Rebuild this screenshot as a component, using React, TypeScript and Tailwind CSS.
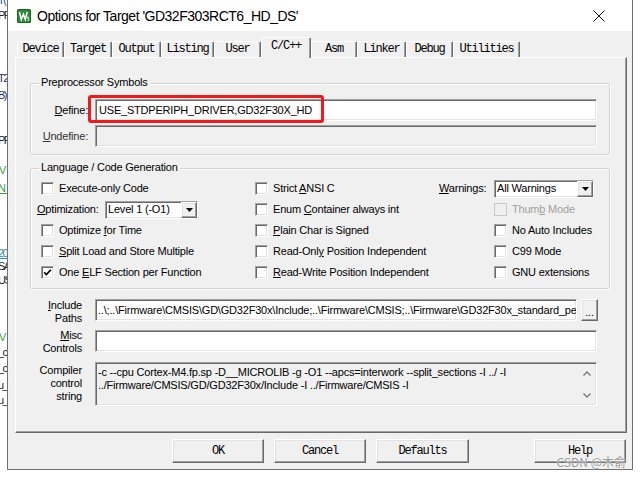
import React from "react";

const sans = "font-['Liberation_Sans',Arial,sans-serif]";
const mono = "font-['Liberation_Mono','Courier_New',monospace]";

// classic win32 3d edges
const sunken =
  "border border-t-[#a0a0a0] border-l-[#a0a0a0] border-b-white border-r-white shadow-[inset_1px_1px_0_#696969,inset_-1px_-1px_0_#e3e3e3]";
const raised =
  "border border-t-white border-l-white border-b-[#696969] border-r-[#696969] shadow-[inset_-1px_-1px_0_#a0a0a0,inset_1px_1px_0_#e3e3e3]";

function U({ children }: { children: React.ReactNode }) {
  return <span className="underline decoration-1 underline-offset-[1px]">{children}</span>;
}

function Check({ checked = false, disabled = false }: { checked?: boolean; disabled?: boolean }) {
  return (
    <span
      className={`w-[13px] h-[13px] shrink-0 flex items-center justify-center ${
        disabled ? "border border-[#c8c8c8] bg-[#f0f0f0]" : `${sunken} bg-white`
      }`}
    >
      {checked && (
        <svg width="9" height="9" viewBox="0 0 9 9">
          <path d="M1.2 4.2 L3.4 6.6 L7.8 1.8" stroke="#000" strokeWidth="1.7" fill="none" />
        </svg>
      )}
    </span>
  );
}

function CheckItem({
  children,
  checked,
  disabled,
  className = "",
}: {
  children: React.ReactNode;
  checked?: boolean;
  disabled?: boolean;
  className?: string;
}) {
  return (
    <div className={`flex items-center gap-[5px] whitespace-nowrap ${disabled ? "text-[#a0a0a0]" : ""} ${className}`}>
      <Check checked={checked} disabled={disabled} />
      <span>{children}</span>
    </div>
  );
}

function Select({ value, className }: { value: string; className: string }) {
  return (
    <div className={`${sunken} bg-white h-[18px] flex items-stretch ${className}`}>
      <span className="flex-1 pl-[2px] flex items-center whitespace-nowrap">{value}</span>
      <span className={`${raised} bg-[#f0f0f0] w-[16px] flex items-center justify-center`}>
        <svg width="7" height="4" viewBox="0 0 7 4">
          <path d="M0 0 H7 L3.5 4 Z" fill="#000" />
        </svg>
      </span>
    </div>
  );
}

function Group({ title, className, children }: { title: string; className: string; children: React.ReactNode }) {
  return (
    <div className={`relative w-[580px] border border-[#d3d3d3] rounded-[2px] shadow-[1px_1px_0_#fff,inset_1px_1px_0_#fff] ${className}`}>
      <span className="absolute left-[8px] top-[-8px] px-[2px] bg-[#f0f0f0] whitespace-nowrap">{title}</span>
      {children}
    </div>
  );
}

// bits of the editor window peeking out behind the dialog
function BackdropStrip() {
  return (
    <div className="w-[7px] h-full shrink-0 overflow-hidden flex flex-col text-[11px] leading-[13px] tracking-[-1.5px] whitespace-nowrap">
      <div className="-mt-[6px] -ml-[2px] text-[#1f4fa8]">T(</div>
      <div className="mt-[2px] -ml-[2px] text-[#222]">PP</div>
      <div className="mt-[50px] -ml-[2px] text-[#1c2a5c]">T2</div>
      <div className="mt-[4px] -ml-[2px] text-[#1c2a5c]">B)</div>
      <div className="mt-[32px] -ml-[2px] text-[#222]">PP</div>
      <div className="mt-[17px] -ml-[1px] text-[#3c9c3c]">V</div>
      <div className="mt-[5px] -ml-[2px] text-[#3c9c3c] underline">N_</div>
      <div className="mt-[52px] -ml-[2px] text-[#2f8ac0] underline">20</div>
      <div className="-ml-[2px] text-[#222]">SA</div>
      <div className="mt-[1px] -ml-[2px] text-[#222]">US</div>
      <div className="mt-[44px] -ml-[1px] text-[#3c9c3c]">V</div>
      <div className="mt-[2px] -ml-[2px] text-[#222]">_c</div>
      <div className="mt-[3px] -ml-[2px] text-[#222]">_c</div>
      <div className="mt-[4px] -ml-[2px] text-[#222]">u_</div>
      <div className="mt-[2px] -ml-[2px] text-[#222]">u_</div>
    </div>
  );
}

function TitleBar() {
  return (
    <div className="h-[31px] shrink-0 bg-white flex items-center pl-[9px] pr-[27px]">
      <svg width="14" height="14" viewBox="0 0 14 14">
        <rect x="0" y="0" width="14" height="14" rx="1.5" fill="#2f8a35" />
        <rect x="0.5" y="0.5" width="13" height="13" rx="1.5" fill="none" stroke="#1c6322" />
        <path d="M2.4 3 L4.3 10.5 L6.4 5.2 L8.3 10.5 L10.2 3" stroke="#fff" strokeWidth="1.5" fill="none" />
        <path d="M10.4 8 H12.2 M10.6 8 V9.6 H12 V11.4 H10.4" stroke="#dfeee0" strokeWidth="0.8" fill="none" />
      </svg>
      <span className="ml-[6px] text-[14px] leading-[16px] tracking-[-0.5px] text-black">
        Options for Target 'GD32F303RCT6_HD_DS'
      </span>
      <svg className="ml-auto" width="12" height="12" viewBox="0 0 12 12">
        <path d="M0.5 0.5 L11.5 11.5 M11.5 0.5 L0.5 11.5" stroke="#111" strokeWidth="1" />
      </svg>
    </div>
  );
}

const tabs = [
  { label: "Device", w: "w-[47px]" },
  { label: "Target", w: "w-[48px]" },
  { label: "Output", w: "w-[49px]" },
  { label: "Listing", w: "w-[53px]" },
  { label: "User", w: "w-[47px]" },
  { label: "C/C++", w: "w-[50px]", active: true },
  { label: "Asm", w: "w-[46px]" },
  { label: "Linker", w: "w-[49px]" },
  { label: "Debug", w: "w-[47px]" },
  { label: "Utilities", w: "w-[67px]" },
];

function Tabs() {
  return (
    <div className={`h-[20px] ml-[9px] flex items-end ${mono} text-[12px] leading-[13px] tracking-[-1.2px]`}>
      {tabs.map((t) =>
        t.active ? (
          <div
            key={t.label}
            className={`${t.w} h-[21px] -mb-px relative z-10 bg-[#f0f0f0] border-t border-l border-r border-t-white border-l-white border-r-[#696969] shadow-[inset_-1px_0_0_#a0a0a0] rounded-t-[2px] flex justify-center pt-[2px]`}
          >
            {t.label}
          </div>
        ) : (
          <div
            key={t.label}
            className={`${t.w} h-[16px] border-t border-l border-r border-t-white border-l-white border-r-[#696969] shadow-[inset_-1px_0_0_#a0a0a0] rounded-t-[2px] flex items-center justify-center`}
          >
            {t.label}
          </div>
        )
      )}
    </div>
  );
}

function Panel() {
  return (
    <div className="ml-[7px] w-[612px] h-[376px] border-t border-l border-t-white border-l-white border-r border-b border-r-[#696969] border-b-[#696969] shadow-[inset_-1px_-1px_0_#a0a0a0] pl-[14px] pt-[25px]">
      {/* Preprocessor symbols */}
      <Group title="Preprocessor Symbols" className="h-[72px] pt-[15px]">
        <div className="flex items-center">
          <span className="w-[57px] text-right">
            <U>D</U>efine:
          </span>
          <div className="relative ml-[7px]">
            <div className={`${sunken} bg-white w-[502px] h-[22px] flex items-center pl-[3px] whitespace-nowrap`}>
              USE_STDPERIPH_DRIVER,GD32F30X_HD
            </div>
            <div className="absolute left-[-7px] top-[-4px] w-[236px] h-[28px] border-[3px] border-[#f2191c] rounded-[3px]" />
          </div>
        </div>
        <div className="flex items-center mt-[4px]">
          <span className="w-[57px] text-right text-[#333]">
            <U>U</U>ndefine:
          </span>
          <div className={`${sunken} bg-[#f0f0f0] ml-[7px] w-[502px] h-[22px]`} />
        </div>
      </Group>

      {/* Language / code generation */}
      <Group title="Language / Code Generation" className="mt-[13px] h-[121px] pt-[9px] pl-[6px]">
        <div className="h-[21px] flex items-center">
          <div className="w-[218px]">
            <CheckItem className="ml-[4px]">Execute-only Code</CheckItem>
          </div>
          <div className="w-[184px]">
            <CheckItem>
              Strict <U>A</U>NSI C
            </CheckItem>
          </div>
          <div className="flex items-center">
            <span className="w-[55px]">
              <U>W</U>arnings:
            </span>
            <Select value="All Warnings" className="w-[100px]" />
          </div>
        </div>
        <div className="h-[21px] flex items-center">
          <div className="w-[218px] flex items-center">
            <span className="w-[68px]">
              <U>O</U>ptimization:
            </span>
            <Select value="Level 1 (-O1)" className="w-[93px]" />
          </div>
          <div className="w-[184px]">
            <CheckItem>
              Enum <U>C</U>ontainer always int
            </CheckItem>
          </div>
          <CheckItem disabled className="ml-[55px]">
            Thum<U>b</U> Mode
          </CheckItem>
        </div>
        <div className="h-[21px] flex items-center">
          <div className="w-[218px]">
            <CheckItem className="ml-[4px]">
              Optimize <U>f</U>or Time
            </CheckItem>
          </div>
          <div className="w-[184px]">
            <CheckItem>
              <U>P</U>lain Char is Signed
            </CheckItem>
          </div>
          <CheckItem className="ml-[55px]">No Auto Includes</CheckItem>
        </div>
        <div className="h-[21px] flex items-center">
          <div className="w-[218px]">
            <CheckItem className="ml-[4px]">
              <U>S</U>plit Load and Store Multiple
            </CheckItem>
          </div>
          <div className="w-[184px]">
            <CheckItem>
              Read-Onl<U>y</U> Position Independent
            </CheckItem>
          </div>
          <CheckItem className="ml-[55px]">C99 Mode</CheckItem>
        </div>
        <div className="h-[21px] flex items-center">
          <div className="w-[218px]">
            <CheckItem checked className="ml-[4px]">
              One <U>E</U>LF Section per Function
            </CheckItem>
          </div>
          <div className="w-[184px]">
            <CheckItem>
              <U>R</U>ead-Write Position Independent
            </CheckItem>
          </div>
          <CheckItem className="ml-[55px]">GNU extensions</CheckItem>
        </div>
      </Group>

      {/* Paths and controls */}
      <div className="mt-[10px] h-[31px] flex items-start">
        <div className="w-[52px] text-right">
          <div>
            <U>I</U>nclude
          </div>
          <div>Paths</div>
        </div>
        <div className={`${sunken} bg-white ml-[13px] w-[482px] h-[22px] flex items-center pl-[2px] overflow-hidden whitespace-nowrap`}>
          ..\;..\Firmware\CMSIS\GD\GD32F30x\Include;..\Firmware\CMSIS;..\Firmware\GD32F30x_standard_peripheral\Include
        </div>
        <div className={`${raised} ml-[4px] w-[17px] h-[22px] flex items-end justify-center pb-[4px] leading-[8px]`}>...</div>
      </div>
      <div className="h-[32px] flex items-start">
        <div className="w-[52px] text-right -mt-[1px]">
          <div>
            <U>M</U>isc
          </div>
          <div>Controls</div>
        </div>
        <div className={`${sunken} bg-white ml-[13px] w-[502px] h-[22px]`} />
      </div>
      <div className="h-[44px] flex items-start">
        <div className="w-[52px] text-right mt-[2px]">
          <div>Compiler</div>
          <div>control</div>
          <div>string</div>
        </div>
        <div className={`${sunken} bg-[#f0f0f0] ml-[13px] w-[502px] h-[44px] flex`}>
          <div className="flex-1 pl-[2px] pt-[3px] whitespace-nowrap overflow-hidden">
            <div>-c --cpu Cortex-M4.fp.sp -D__MICROLIB -g -O1 --apcs=interwork --split_sections -I ../ -I</div>
            <div>../Firmware/CMSIS/GD/GD32F30x/Include -I ../Firmware/CMSIS -I</div>
          </div>
          <div className="w-[17px] mr-[1px] flex flex-col items-center justify-between pt-[8px] pb-[7px]">
            <svg width="8" height="5" viewBox="0 0 8 5">
              <path d="M0.5 4.5 L4 1 L7.5 4.5" stroke="#7a7a7a" strokeWidth="1.4" fill="none" />
            </svg>
            <svg width="8" height="5" viewBox="0 0 8 5">
              <path d="M0.5 0.5 L4 4 L7.5 0.5" stroke="#7a7a7a" strokeWidth="1.4" fill="none" />
            </svg>
          </div>
        </div>
      </div>
    </div>
  );
}

function Buttons() {
  const btn = `${raised} bg-[#f0f0f0] h-[24px] flex items-center justify-center ${mono} text-[12px] tracking-[-1.2px]`;
  return (
    <div className="mt-[6px] h-[24px] flex pl-[164px]">
      <div className={`${btn} w-[92px]`}>OK</div>
      <div className={`${btn} w-[92px] ml-[10px]`}>Cancel</div>
      <div className={`${btn} w-[93px] ml-[10px]`}>Defaults</div>
      <div className={`${btn} w-[92px] ml-[65px]`}>Help</div>
    </div>
  );
}

export default function App() {
  return (
    <div className={`relative w-[640px] h-[477px] bg-white flex overflow-hidden ${sans} text-[11px] leading-[13px] tracking-[-0.2px] text-black`}>
      <BackdropStrip />
      <div className="w-[626px] h-[470px] shrink-0 flex flex-col border-l border-r border-b border-[#707070]">
        <TitleBar />
        <div className="flex-1 bg-[#f0f0f0] pt-[6px]">
          <Tabs />
          <Panel />
          <Buttons />
        </div>
      </div>
      <div className="absolute right-[14px] top-[455px] text-[12px] leading-[13px] tracking-normal text-[#9a9a9a] font-['Noto_Sans_CJK_SC',sans-serif] [text-shadow:0_0_2px_#fff]">
        CSDN @木俞
      </div>
    </div>
  );
}
